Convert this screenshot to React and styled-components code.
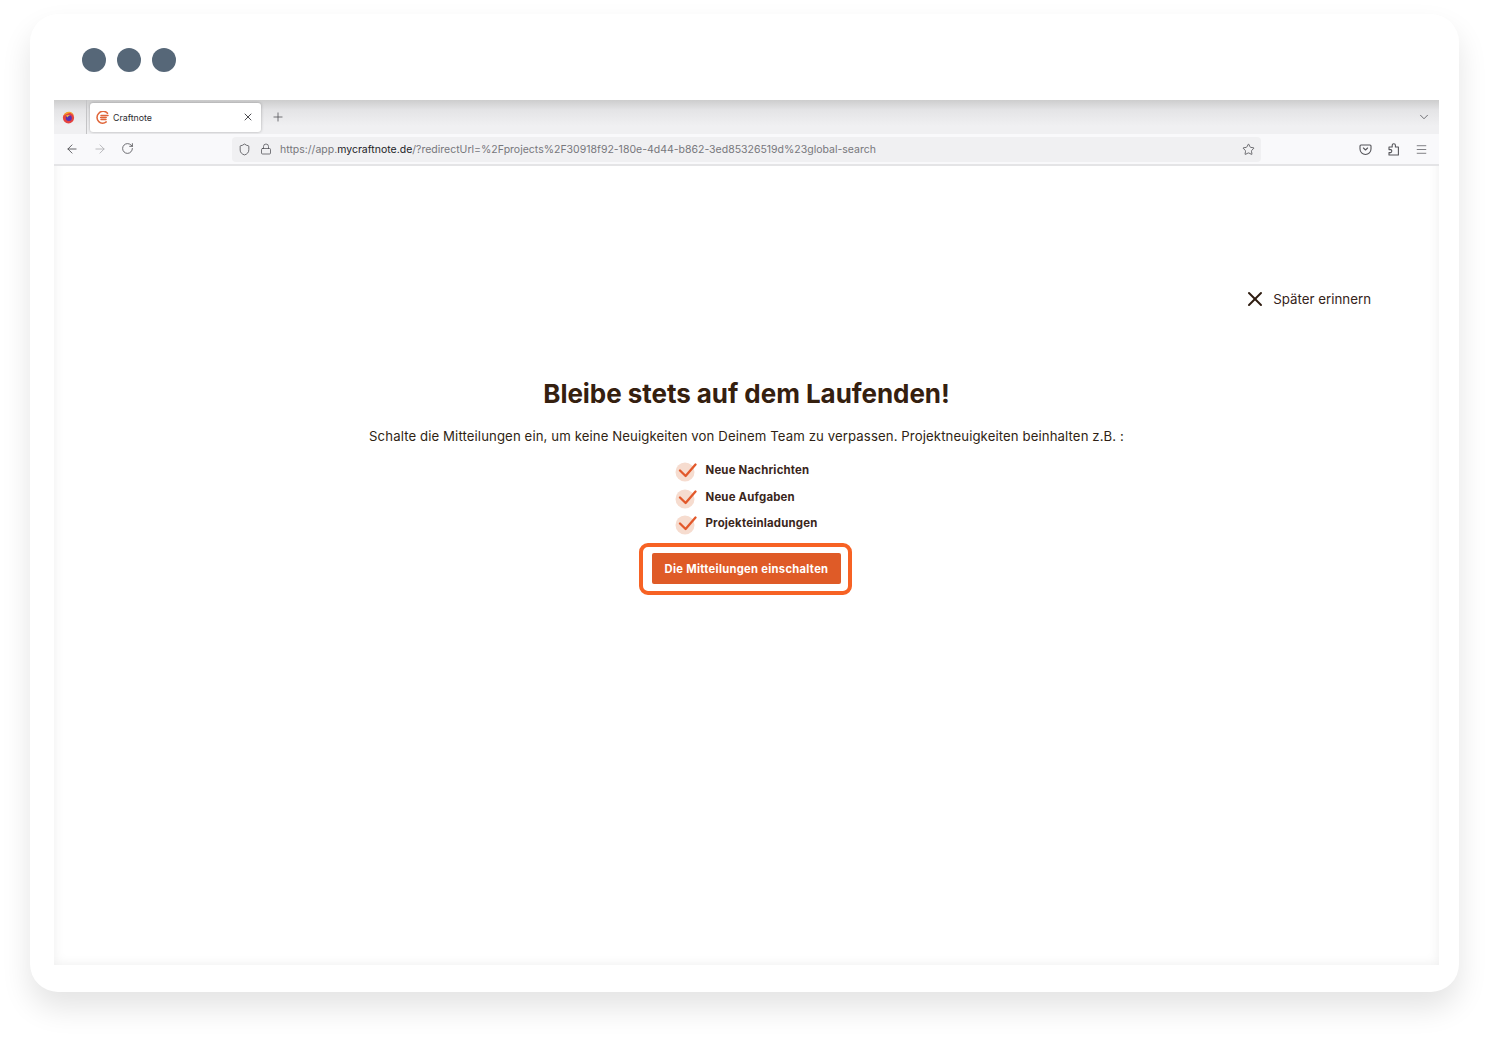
import styled, { createGlobalStyle } from "styled-components";
import { X, Plus, ArrowLeft, ArrowRight, RotateCw, Shield, Lock, Star, ChevronDown, Menu } from "lucide-react";

const GlobalStyle = createGlobalStyle`
  html, body { margin: 0; padding: 0; background: #fff; }
  body { font-family: "Inter", "Liberation Sans", sans-serif; }
`;

const Page = styled.div`
  width: 1489px;
  height: 1038px;
  padding: 14px 30px 46px;
  box-sizing: border-box;
  overflow: hidden;
`;

const Device = styled.div`
  height: 100%;
  background: #fff;
  border-radius: 28px;
  padding: 34px 20px 27px 24px;
  box-sizing: border-box;
  display: flex;
  flex-direction: column;
  gap: 28px;
  box-shadow: 0 16px 30px rgba(0, 0, 0, 0.11);
`;

const Dots = styled.div`
  display: flex;
  gap: 11px;
  padding-left: 28px;
`;

const Dot = styled.span`
  width: 24px;
  height: 24px;
  border-radius: 50%;
  background: #566778;
`;

const Screen = styled.div`
  flex: 1;
  display: flex;
  flex-direction: column;
  background: #fff;
  box-shadow: inset 0 0 12px rgba(0, 0, 0, 0.07);
`;

const TabStrip = styled.div`
  height: 34px;
  display: flex;
  align-items: center;
  background: linear-gradient(#cdcdcd 0, #e4e4e6 10px, #f0f0f2 26px);
  color: #4a4a4f;
`;

const BrowserLogo = styled.div`
  width: 33px;
  height: 100%;
  padding-right: 3px;
  display: flex;
  align-items: center;
  justify-content: center;
  border-right: 1px solid #c4c4c6;
  box-sizing: border-box;
`;

const Tab = styled.div`
  width: 171px;
  height: 29px;
  margin-left: 3px;
  padding: 0 7px 0 6px;
  box-sizing: border-box;
  display: flex;
  align-items: center;
  gap: 4px;
  background: #fff;
  border-radius: 3px;
  box-shadow: 0 0 3px rgba(0, 0, 0, 0.3);
`;

const TabTitle = styled.span`
  flex: 1;
  font-size: 8.8px;
  color: #2b2b30;
`;

const NewTab = styled.span`
  display: flex;
  margin-left: 10px;
  flex: 1;
`;

const CollapseTabs = styled.span`
  display: flex;
  padding-right: 8px;
`;

const NavBar = styled.div`
  height: 32px;
  display: flex;
  align-items: center;
  background: #f9f9fb;
  border-bottom: 2px solid #e4e4e6;
  box-sizing: border-box;
  color: #4f4f54;
`;

const NavButtons = styled.div`
  width: 178px;
  padding-left: 11px;
  box-sizing: border-box;
  display: flex;
  gap: 14px;
`;

const UrlBar = styled.div`
  width: 1029px;
  height: 25px;
  padding: 0 6px;
  box-sizing: border-box;
  display: flex;
  align-items: center;
  gap: 8.5px;
  background: #f0f0f2;
  border-radius: 4px;
`;

const Url = styled.span`
  flex: 1;
  font-size: 10.5px;
  color: #77777c;
  white-space: nowrap;
`;

const Host = styled.b`
  font-weight: 400;
  color: #222226;
`;

const NavTools = styled.div`
  flex: 1;
  display: flex;
  justify-content: flex-end;
  align-items: center;
  gap: 14.5px;
  padding-right: 11px;
`;

const Content = styled.main`
  flex: 1;
  display: flex;
  flex-direction: column;
  align-items: center;
  color: #33210f;
  padding-top: 123px;
`;

const RemindRow = styled.div`
  align-self: stretch;
  display: flex;
  justify-content: flex-end;
  align-items: center;
  gap: 6px;
  padding-right: 68px;
  height: 20px;
  font-size: 13.3px;
  color: #35231a;
`;

const Title = styled.h1`
  margin: 69px 0 0;
  font-size: 26px;
  line-height: 32px;
  font-weight: 700;
  color: #35200f;
  letter-spacing: -0.05px;
`;

const Lead = styled.p`
  margin: 16px 0 0;
  font-size: 13.2px;
  line-height: 20px;
  letter-spacing: 0.1px;
  color: #2f1f14;
`;

const Checks = styled.ul`
  list-style: none;
  margin: 14px 0 0;
  padding: 0;
  width: 144px;
  display: flex;
  flex-direction: column;
  gap: 6.5px;
`;

const Check = styled.li`
  display: flex;
  align-items: center;
  gap: 9px;
  height: 20px;
  font-size: 11.4px;
  font-weight: 700;
  letter-spacing: 0.2px;
  color: #3a261b;
  white-space: nowrap;
`;

const Highlight = styled.div`
  margin: 10px 2px 0 0;
  padding: 6px 7px 7px 9px;
  border: 4px solid #f76224;
  border-radius: 9px;
`;

const Cta = styled.button`
  display: block;
  width: 189px;
  height: 31px;
  border: none;
  border-radius: 2px;
  background: #df5b27;
  color: #fff;
  font-family: inherit;
  font-size: 11.2px;
  font-weight: 700;
  letter-spacing: 0.3px;
`;

const FirefoxIcon = () => (
  <svg width="13" height="13" viewBox="0 0 13 13">
    <circle cx="6.5" cy="6.8" r="5.6" fill="#e5433f" />
    <path d="M1.5 5C2.5 1.8 5 .6 7.5.8c2.8.3 4.6 2.6 4.6 5.2 0-1.6-1.2-2.8-2.4-3.2C9.4 2 8 1.6 6.6 2.2 4 3 2.6 4 1.5 5Z" fill="#f8a32a" />
    <circle cx="6.8" cy="7" r="3" fill="#5b2fb0" />
    <path d="M4 4.6c1.6-1 3.4-.8 4.4.3-1.4-.2-2.6.4-3 1.6L4 4.6Z" fill="#f6bf3a" />
  </svg>
);

const CraftnoteIcon = () => (
  <svg width="13" height="13" viewBox="0 0 13 13" fill="none" stroke="#e0663a" strokeWidth="1.5" strokeLinecap="round">
    <path d="M11.5 2.3A5.6 5.6 0 0 0 2.6 2.6a5.6 5.6 0 0 0 .2 8 5.6 5.6 0 0 0 7.4.3" />
    <path d="M5 4.6h7M4.6 6.6h5.6M5 8.6h5" />
  </svg>
);

const PocketIcon = () => (
  <svg width="13" height="13" viewBox="0 0 13 13" fill="none" stroke="#55555a" strokeWidth="1.1" strokeLinecap="round" strokeLinejoin="round">
    <path d="M2 2h9a1 1 0 0 1 1 1v3a5.5 5.5 0 0 1-11 0V3a1 1 0 0 1 1-1Z" />
    <path d="M4.4 5l2.1 2 2.1-2" />
  </svg>
);

const ExtensionIcon = () => (
  <svg width="14" height="14" viewBox="0 0 14 14" fill="none" stroke="#55555a" strokeWidth="1.1" strokeLinejoin="round">
    <path d="M2 5h3.2V3.2c0-2 3.2-2 3.2 0V5h3v8H2v-2.4h1.6c1.6 0 1.6-3 0-3H2Z" />
  </svg>
);

const CheckBadge = () => (
  <svg width="22" height="24" viewBox="0 0 22 24" fill="none">
    <circle cx="10" cy="14" r="9.5" fill="#f6dccf" />
    <path d="M5 12.5l5.6 5.5L20.5 6.5" stroke="#e2582a" strokeWidth="2.3" strokeLinecap="round" strokeLinejoin="round" />
  </svg>
);

const features = ["Neue Nachrichten", "Neue Aufgaben", "Projekteinladungen"];

export default function App() {
  return (
    <Page>
      <GlobalStyle />
      <Device>
        <Dots>
          <Dot />
          <Dot />
          <Dot />
        </Dots>
        <Screen>
          <TabStrip>
            <BrowserLogo>
              <FirefoxIcon />
            </BrowserLogo>
            <Tab>
              <CraftnoteIcon />
              <TabTitle>Craftnote</TabTitle>
              <X size={12} strokeWidth={1.7} color="#2b2b30" />
            </Tab>
            <NewTab>
              <Plus size={14} strokeWidth={1.3} />
            </NewTab>
            <CollapseTabs>
              <ChevronDown size={14} strokeWidth={1.3} />
            </CollapseTabs>
          </TabStrip>
          <NavBar>
            <NavButtons>
              <ArrowLeft size={14} strokeWidth={1.5} />
              <ArrowRight size={14} strokeWidth={1.5} color="#b0b0b4" />
              <RotateCw size={13} strokeWidth={1.5} />
            </NavButtons>
            <UrlBar>
              <Shield size={13} strokeWidth={1.5} />
              <Lock size={12} strokeWidth={1.5} />
              <Url>
                https://app.<Host>mycraftnote.de</Host>/?redirectUrl=%2Fprojects%2F30918f92-180e-4d44-b862-3ed85326519d%23global-search
              </Url>
              <Star size={13} strokeWidth={1.5} />
            </UrlBar>
            <NavTools>
              <PocketIcon />
              <ExtensionIcon />
              <Menu size={13} strokeWidth={1.3} />
            </NavTools>
          </NavBar>
          <Content>
            <RemindRow>
              <X size={24} strokeWidth={2} color="#2e1c10" />
              <span>Später erinnern</span>
            </RemindRow>
            <Title>Bleibe stets auf dem Laufenden!</Title>
            <Lead>Schalte die Mitteilungen ein, um keine Neuigkeiten von Deinem Team zu verpassen. Projektneuigkeiten beinhalten z.B. :</Lead>
            <Checks>
              {features.map((f) => (
                <Check key={f}>
                  <CheckBadge />
                  {f}
                </Check>
              ))}
            </Checks>
            <Highlight>
              <Cta>Die Mitteilungen einschalten</Cta>
            </Highlight>
          </Content>
        </Screen>
      </Device>
    </Page>
  );
}
